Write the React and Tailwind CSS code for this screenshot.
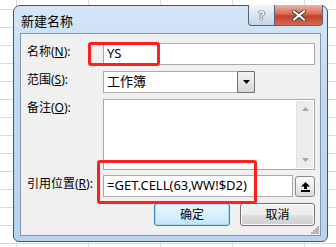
export default function App() {
  return (
    <div className="w-[336px] h-[247px] overflow-hidden bg-white bg-[linear-gradient(to_right,#dadada_1px,transparent_1px),linear-gradient(to_bottom,#dadada_1px,transparent_1px)] [background-size:72px_18px] [background-position:16px_9px] pt-[5px] pl-[13px] font-['Noto_Sans','Noto_Sans_CJK_SC',sans-serif] text-[13px] text-black">
      <div className="w-[315px] h-[237px] flex flex-col rounded-t-[7px] rounded-b-[6px] border border-[#44546a] bg-[linear-gradient(to_bottom,#d5e6f7,#c2d9f0_35%,#b9d3ee)] px-[6px] pb-[5px]">
        {/* title bar */}
        <div className="h-[27px] flex justify-between">
          <div className="pl-[1px] pt-[6px] leading-[18px]">新建名称</div>
          <div className="flex -mt-px -mr-[2px] h-[21px]">
            <div className="w-[27px] flex items-center justify-center rounded-bl-[4px] border border-[#56667a] border-t-0 bg-[linear-gradient(to_bottom,#f1f5fa,#dbe5f0_50%,#c5d4e4)] text-white font-bold text-[13px] leading-none [text-shadow:0_0_1px_#333,0_0_1px_#333,0_0_1px_#333]">
              ?
            </div>
            <div className="w-[48px] flex items-center justify-center rounded-br-[4px] border border-l-0 border-t-0 border-[#56667a] bg-[linear-gradient(to_bottom,#eeb3a4,#d86b52_45%,#c2412a_55%,#d4684f)]">
              <svg width="14" height="11" viewBox="0 0 14 11">
                <path d="M2 1.5 L12 9.5 M12 1.5 L2 9.5" stroke="#3b3b3b" strokeWidth="4" strokeLinecap="square" />
                <path d="M2 1.5 L12 9.5 M12 1.5 L2 9.5" stroke="#fff" strokeWidth="2" strokeLinecap="square" />
              </svg>
            </div>
          </div>
        </div>

        {/* client area */}
        <div className="flex-1 relative flex flex-col border border-[#8196ad] bg-[#f0f0f0] pl-[6px] pr-[5px]">
          <div className="mt-[9px] h-[22px] flex">
            <div className="w-[76px] leading-[18px] text-[12px]">名称(<u>N</u>):</div>
            <div className="flex-1 flex items-center border border-[#a9a9a9] bg-white pl-[3px]">YS</div>
          </div>

          <div className="mt-[6px] h-[22px] flex">
            <div className="w-[76px] leading-[18px] text-[12px]">范围(<u>S</u>):</div>
            <div className="w-[152px] flex border border-[#a9a9a9] bg-white">
              <div className="flex-1 flex items-center pl-[3px]">工作簿</div>
              <div className="w-[18px] -m-px flex items-center justify-center border border-[#707070] rounded-[2px] bg-[linear-gradient(to_bottom,#f3f3f3,#e6e6e6_50%,#d6d6d6)]">
                <svg width="7" height="4" viewBox="0 0 7 4">
                  <polygon points="0,0 7,0 3.5,4" fill="#000" />
                </svg>
              </div>
            </div>
          </div>

          <div className="mt-[6px] h-[71px] flex">
            <div className="w-[76px] leading-[18px] text-[12px]">备注(<u>O</u>):</div>
            <div className="flex-1 flex justify-end border border-[#a9a9a9] bg-white">
              <div className="w-[17px] my-px mr-px flex flex-col justify-between items-center py-[6px] bg-[#ececec] border-l border-[#e2e2e2]">
                <svg width="7" height="4" viewBox="0 0 7 4">
                  <polygon points="3.5,0 7,4 0,4" fill="#a3a3a3" />
                </svg>
                <svg width="7" height="4" viewBox="0 0 7 4">
                  <polygon points="0,0 7,0 3.5,4" fill="#a3a3a3" />
                </svg>
              </div>
            </div>
          </div>

          <div className="mt-[5px] h-[22px] flex gap-[2px]">
            <div className="w-[76px] leading-[18px] text-[12px] -mr-[2px]">引用位置(<u>R</u>):</div>
            <div className="flex-1 flex items-center border border-[#a9a9a9] bg-white pl-[3px]">=GET.CELL(63,WW!$D2)</div>
            <div className="w-[20px] h-[21px] mt-px flex items-center justify-center rounded-[3px] border border-[#8a8a8a] bg-[linear-gradient(to_bottom,#fbfbfb,#ececec_50%,#dcdcdc)]">
              <svg width="9" height="10" viewBox="0 0 9 10">
                <polygon points="4.5,0 9,4.5 0,4.5" fill="#000" />
                <rect x="3" y="4" width="3" height="3" fill="#000" />
                <rect x="0" y="8" width="9" height="2" fill="#000" />
              </svg>
            </div>
          </div>

          <div className="mt-[6px] h-[23px] flex justify-end gap-[10px] text-[12px]">
            <button className="w-[76px] flex items-center justify-center rounded-[3px] border border-[#3c7fb1] bg-[linear-gradient(to_bottom,#eaf6fd,#d9f0fc_50%,#bee6fd)] shadow-[inset_0_0_0_1px_#a8dcf7] leading-none">
              确定
            </button>
            <button className="w-[75px] flex items-center justify-center rounded-[3px] border border-[#707070] bg-[linear-gradient(to_bottom,#f2f2f2,#ebebeb_50%,#dddddd_51%,#cfcfcf)] shadow-[inset_0_0_0_1px_#fcfcfc] leading-none">
              取消
            </button>
          </div>

          {/* resize grip */}
          <svg className="absolute right-px bottom-px" width="10" height="10" viewBox="0 0 10 10">
            <g fill="#b5b5b5">
              <rect x="8" y="2" width="2" height="2" />
              <rect x="6" y="4" width="2" height="2" />
              <rect x="8" y="4" width="2" height="2" />
              <rect x="4" y="6" width="2" height="2" />
              <rect x="6" y="6" width="2" height="2" />
              <rect x="8" y="6" width="2" height="2" />
              <rect x="2" y="8" width="2" height="2" />
              <rect x="4" y="8" width="2" height="2" />
              <rect x="6" y="8" width="2" height="2" />
              <rect x="8" y="8" width="2" height="2" />
            </g>
          </svg>

          {/* red annotation boxes */}
          <div className="absolute left-[67px] top-[8px] w-[72px] h-[24px] border-[3px] border-[#ff1f1f] rounded-[3px]" />
          <div className="absolute left-[76px] top-[126px] w-[160px] h-[44px] border-[3px] border-[#ff1f1f] rounded-[3px]" />
        </div>
      </div>
    </div>
  );
}
